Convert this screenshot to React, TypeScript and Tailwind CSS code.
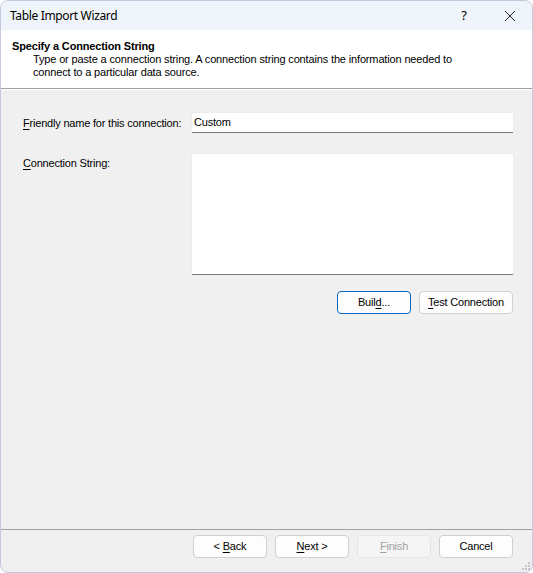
import React from "react";

const U = ({ children }: { children: React.ReactNode }) => <span className="underline underline-offset-2">{children}</span>;

function Btn({ children, className = "", disabled = false, primary = false }: { children: React.ReactNode; className?: string; disabled?: boolean; primary?: boolean }) {
  return (
    <div
      className={
        "flex h-[23px] w-[74px] items-center justify-center rounded-[4px] border text-[11px] tracking-[-0.2px] " +
        (primary
          ? "border-[#0067c0] bg-[#fdfdfd] text-black shadow-[inset_0_0_0_1px_#ffffff]"
          : disabled
          ? "border-[#e5e5e5] bg-[#f5f5f5] text-[#a0a0a0]"
          : "border-[#d0d0d0] bg-[#fdfdfd] text-black") +
        " " +
        className
      }
    >
      {children}
    </div>
  );
}

export default function App() {
  return (
    <div
      className="relative flex h-[573px] w-[533px] flex-col overflow-hidden rounded-[8px] border border-[#c6c9dc] bg-[#f0f0f0] text-black"
      style={{ fontFamily: '"Liberation Sans", Arial, sans-serif' }}
    >
      {/* Title bar */}
      <div className="flex h-[29px] shrink-0 items-center bg-[#eef4f9] pl-[9px]" style={{ fontFamily: '"Noto Sans", "Liberation Sans", sans-serif' }}>
        <span className="text-[12px] tracking-[-0.35px]">Table Import Wizard</span>
        <div className="ml-auto flex items-center">
          <span className="mr-[37px] text-[13px]">?</span>
          <svg width="12" height="12" viewBox="0 0 12 12" className="mr-[16px]">
            <path d="M1 1 L11 11 M11 1 L1 11" stroke="#222" strokeWidth="1" />
          </svg>
        </div>
      </div>
      {/* Header */}
      <div className="flex h-[58px] shrink-0 flex-col bg-white pl-[11px] pt-[10px] tracking-[-0.15px]">
        <div className="text-[11px] font-bold leading-[13px]">Specify a Connection String</div>
        <div className="pl-[21px] text-[11px] leading-[13px]">
          Type or paste a connection string. A connection string contains the information needed to
          <br />
          connect to a particular data source.
        </div>
      </div>
      <div className="h-px shrink-0 bg-[#a0a0a0]" />
      <div className="h-px shrink-0 bg-white" />
      {/* Body */}
      <div className="flex flex-1 flex-col pl-[20px] pr-[19px] pt-[23px] tracking-[-0.2px]">
        <div className="flex items-center">
          <div className="w-[171px] pl-[2px] text-[11px]">
            <U>F</U>riendly name for this connection:
          </div>
          <div className="flex h-[20px] flex-1 items-center border-b border-[#7a7a7a] bg-white pl-[2px] text-[11px] shadow-[0_0_0_1px_#ececec]">
            Custom
          </div>
        </div>
        <div className="mt-[21px] flex">
          <div className="w-[171px] pl-[2px] pt-[1px] text-[11px]">
            <U>C</U>onnection String:
          </div>
          <div className="h-[121px] flex-1 border-b border-[#7a7a7a] bg-white shadow-[0_0_0_1px_#ececec]" />
        </div>
        <div className="mt-[16px] flex justify-end gap-[8px]">
          <Btn primary>
            <span>
              Buil<U>d</U>...
            </span>
          </Btn>
          <Btn className="w-[94px]">
            <span>
              <U>T</U>est Connection
            </span>
          </Btn>
        </div>
      </div>
      <div className="h-px shrink-0 bg-[#a0a0a0]" />
      <div className="flex h-[42px] shrink-0 items-start justify-end gap-[8px] pr-[19px] pt-[5px]">
        <Btn>
          <span>
            &lt; <U>B</U>ack
          </span>
        </Btn>
        <Btn>
          <span>
            <U>N</U>ext &gt;
          </span>
        </Btn>
        <Btn disabled>
          <span>
            <U>F</U>inish
          </span>
        </Btn>
        <Btn>Cancel</Btn>
      </div>
      <svg className="absolute bottom-[2px] right-[2px]" width="10" height="10" viewBox="0 0 10 10">
        {[
          [8, 2],
          [8, 5],
          [5, 5],
          [8, 8],
          [5, 8],
          [2, 8],
        ].map(([x, y], i) => (
          <rect key={i} x={x} y={y} width="2" height="2" fill="#c4c4c4" />
        ))}
      </svg>
    </div>
  );
}
